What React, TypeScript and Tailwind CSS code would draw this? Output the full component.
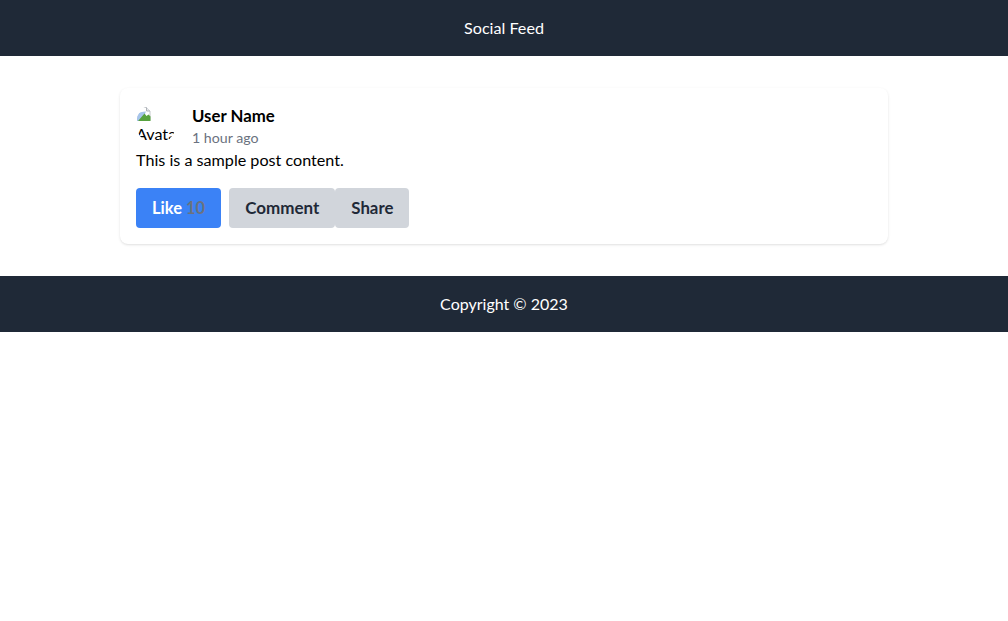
export default function App() {
  return (
    <div className="font-['Lato',sans-serif] text-[16.15px] leading-6 text-black bg-white">
      <header className="bg-[#1f2937] text-white py-4 text-center">Social Feed</header>
      <main className="max-w-3xl mx-auto py-8">
        <div className="bg-white rounded-lg shadow p-4">
          <div className="flex">
            <div className="w-10 h-10 mr-4 rounded-full overflow-hidden shrink-0 leading-6 pt-0.5">
              <svg width="16" height="16" viewBox="0 0 16 16" className="block">
                <path d="M2 1.500h8.500l3.500 3.500v9.500H2z" fill="#fff" stroke="#c3c7cc" />
                <path d="M10.500 1.500v3.500H14" fill="#e8eaec" stroke="#aeb3b9" />
                <path d="M1 15V8.500C3 6.500 6 5.500 10 5.500L6 15z" fill="#a6c4ea" />
                <path d="M2 15l6.500-7.500 2 2.500 2-1.500 2 2V15z" fill="#57a23f" />
              </svg>
              <span className="block whitespace-nowrap">Avatar</span>
            </div>
            <div>
              <div className="font-bold text-[16.8px] leading-6">User Name</div>
              <div className="text-[14.2px] leading-5 text-[#6b7280]">1 hour ago</div>
            </div>
          </div>
          <p>This is a sample post content.</p>
          <div className="flex mt-4">
            <button className="bg-[#3b82f6] text-white font-bold text-[16.5px] leading-6 px-4 py-2 rounded mr-2">
              Like <span className="text-[#6b7280]">10</span>
            </button>
            <button className="bg-[#d1d5db] text-[#1f2937] font-bold text-[17px] leading-6 px-4 py-2 rounded">Comment</button>
            <button className="bg-[#d1d5db] text-[#1f2937] font-bold text-[16.8px] leading-6 px-4 py-2 rounded">Share</button>
          </div>
        </div>
      </main>
      <footer className="bg-[#1f2937] text-white py-4 text-center text-base">Copyright © 2023</footer>
    </div>
  );
}
